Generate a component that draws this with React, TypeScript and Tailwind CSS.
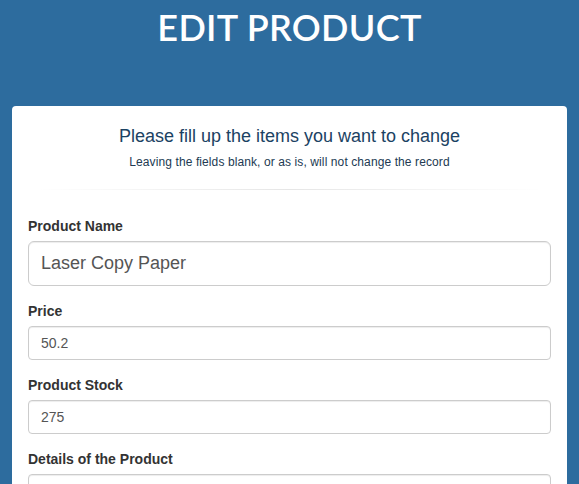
export default function App() {
  return (
    <div className="min-h-[484px] bg-[#2d6c9e] font-['Liberation_Sans',Arial,sans-serif]">
      {/* page title */}
      <div className="h-[106px] pt-[5px] text-center">
        <h1 className="font-['Lato',sans-serif] text-[36px] font-semibold leading-[44px] tracking-[0.3px] text-white">
          EDIT PRODUCT
        </h1>
      </div>

      <div className="mx-[12px] rounded-[4px] bg-white px-[16px] pt-[19px] pb-6">
        <div className="text-center">
          <h3 className="text-[18px] leading-[22px] text-[#1b4263]">
            Please fill up the items you want to change
          </h3>
          <p className="mt-[7px] text-[12px] leading-[17px] tracking-[0.1px] text-[#223a52]">
            Leaving the fields blank, or as is, will not change the record
          </p>
        </div>

        <hr className="mx-[8px] mt-[18px] h-px border-0 bg-gradient-to-r from-transparent via-[#e6e6e6] to-transparent" />

        <form className="mt-[26px]">
          <div className="mb-[15px]">
            <label className="mb-[5px] block text-[14px] font-bold leading-[20px] text-[#333]">
              Product Name
            </label>
            <input
              defaultValue="Laser Copy Paper"
              className="block h-[45px] w-full rounded-[6px] border border-[#ccc] px-[12px] text-[18px] text-[#555] shadow-[inset_0_1px_1px_rgba(0,0,0,0.075)] outline-none"
            />
          </div>

          <div className="mb-[15px]">
            <label className="mb-[5px] block text-[14px] font-bold leading-[20px] text-[#333]">
              Price
            </label>
            <input
              defaultValue="50.2"
              className="block h-[34px] w-full rounded-[4px] border border-[#ccc] px-[12px] text-[14px] text-[#555] shadow-[inset_0_1px_1px_rgba(0,0,0,0.075)] outline-none"
            />
          </div>

          <div className="mb-[15px]">
            <label className="mb-[5px] block text-[14px] font-bold leading-[20px] text-[#333]">
              Product Stock
            </label>
            <input
              defaultValue="275"
              className="block h-[34px] w-full rounded-[4px] border border-[#ccc] px-[12px] text-[14px] text-[#555] shadow-[inset_0_1px_1px_rgba(0,0,0,0.075)] outline-none"
            />
          </div>

          <div className="mb-[15px]">
            <label className="mb-[5px] block text-[14px] font-bold leading-[20px] text-[#333]">
              Details of the Product
            </label>
            <textarea
              rows={3}
              className="block w-full rounded-[4px] border border-[#ccc] px-[12px] py-[6px] text-[14px] text-[#555] shadow-[inset_0_1px_1px_rgba(0,0,0,0.075)] outline-none"
            />
          </div>
        </form>
      </div>
    </div>
  );
}
